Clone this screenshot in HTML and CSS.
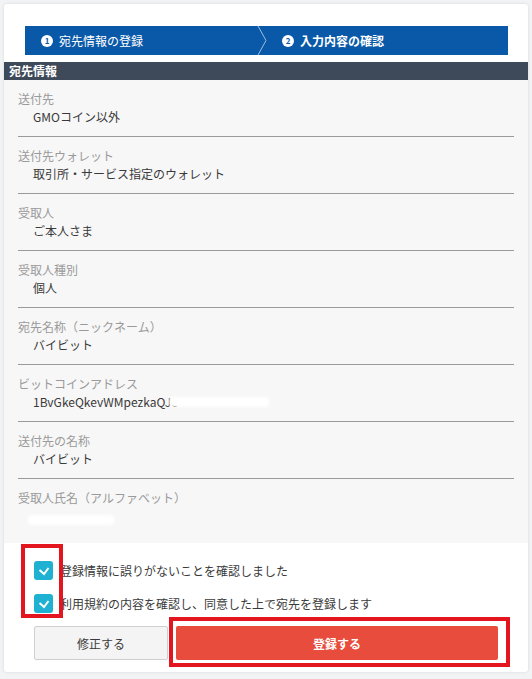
FILE: index.html
```html
<!DOCTYPE html>
<html lang="ja">
  <head>
    <meta charset="utf-8" />
    <meta name="viewport" content="width=device-width, initial-scale=1" />
    <title>宛先情報の確認</title>
    <link rel="stylesheet" href="styles.css">
  </head>
  <body>
    <div class="card">
        <!-- steps -->
        <div class="steps">
            <div class="step"><span class="num">1</span>宛先情報の登録</div>
            <svg class="chevron" width="12" height="29" viewBox="0 0 12 29"><polyline points="1,0 9,14.5 1,29" fill="none" stroke="#9dbde0" stroke-width="1"/></svg>
            <div class="step current"><span class="num">2</span>入力内容の確認</div>
        </div>

        <div class="section-title">宛先情報</div>
        <div class="info">
            <div class="row"><div class="label">送付先</div><div class="value">GMOコイン以外</div></div>
            <div class="row"><div class="label">送付先ウォレット</div><div class="value">取引所・サービス指定のウォレット</div></div>
            <div class="row"><div class="label">受取人</div><div class="value">ご本人さま</div></div>
            <div class="row"><div class="label">受取人種別</div><div class="value">個人</div></div>
            <div class="row"><div class="label">宛先名称（ニックネーム）</div><div class="value">バイビット</div></div>
            <div class="row"><div class="label">ビットコインアドレス</div><div class="value">1BvGkeQkevWMpezkaQJc<span class="masked addr"></span></div></div>
            <div class="row"><div class="label">送付先の名称</div><div class="value">バイビット</div></div>
            <div class="row last"><div class="label">受取人氏名（アルファベット）</div><div class="value"><span class="masked name"></span></div></div>
        </div>

        <div class="confirm">
            <label class="check"><span class="box"><svg width="12" height="10" viewBox="0 0 12 10"><polyline points="1.5,4 6,8 10.5,2" fill="none" stroke="#fff" stroke-width="2"/></svg></span>登録情報に誤りがないことを確認しました</label>
            <label class="check"><span class="box"><svg width="12" height="10" viewBox="0 0 12 10"><polyline points="1.5,4 6,8 10.5,2" fill="none" stroke="#fff" stroke-width="2"/></svg></span>利用規約の内容を確認し、同意した上で宛先を登録します</label>
            <!-- red marking around the checkboxes -->
            <div class="mark mark-checks"></div>

            <div class="buttons">
                <button class="btn btn-back">修正する</button>
                <button class="btn btn-submit">登録する</button>
                <div class="mark mark-submit"></div>
            </div>
        </div>
    </div>
  </body>
</html>
```

FILE: styles.css
```css
body {
    margin: 0;
    background-color: #f2f3f4;
    font-family: "Noto Sans CJK JP", "Noto Sans", sans-serif;
    font-size: 12px;
    color: #3a3a3a;
}

.card {
    margin: 4px;
    width: 524px;
    height: 668px;
    background-color: #fff;
    border-radius: 3px;
    box-shadow: 0 0 3px rgba(0, 0, 0, 0.12);
    padding-top: 22px;
    box-sizing: border-box;
    overflow: hidden;
}

.steps {
    margin: 0 20px 0 21px;
    height: 29px;
    background-color: #0a59a8;
    display: flex;
    align-items: center;
    color: #fff;
}

.step {
    display: flex;
    align-items: center;
    line-height: 29px;
}

/* first step is a fixed width so the chevron sits where it should */
.step:first-child {
    width: 232px;
    padding-left: 16px;
    box-sizing: border-box;
}

.step.current {
    flex: 1;
    font-weight: bold;
    padding-left: 13px;
}

.num {
    width: 12px;
    height: 12px;
    border-radius: 50%;
    background-color: #fff;
    color: #0a59a8;
    font-size: 8px;
    line-height: 12px;
    text-align: center;
    font-weight: bold;
    margin-right: 6px;
}

.chevron {
    display: block;
}

.section-title {
    margin-top: 7px;
    height: 18px;
    line-height: 18px;
    background-color: #3e4a59;
    color: #fff;
    font-weight: bold;
    padding-left: 5px;
}

.info {
    background-color: #f7f7f7;
    padding-bottom: 8px;
}

.row {
    margin: 0 14px;
    padding: 10px 0;
    border-bottom: 1px solid #9a9a9a;
}

.row.last {
    border-bottom: none;
}

.label {
    line-height: 18px;
    color: #9a9a9a;
}

.value {
    line-height: 18px;
    padding-left: 15px;
    height: 18px;
    display: flex;
    align-items: center;
}

.masked {
    display: inline-block;
    height: 10px;
    background-color: #fff;
    border-radius: 4px;
    filter: blur(1.5px);
}

.masked.addr {
    width: 100px;
    margin-left: -8px;
}

.masked.name {
    width: 86px;
    margin-left: -5px;
    margin-top: 8px;
}

.confirm {
    position: relative;
    padding: 18px 30px 0 30px;
}

.check {
    display: flex;
    align-items: center;
    height: 19px;
    margin-bottom: 14px;
    line-height: 19px;
}

.box {
    width: 19px;
    height: 19px;
    border-radius: 3px;
    background-color: #1eb1d2;
    display: flex;
    align-items: center;
    justify-content: center;
    margin-right: 7px;
}

.buttons {
    position: relative;
    display: flex;
    gap: 8px;
    margin-top: -1px;
}

.btn {
    height: 34px;
    font-family: inherit;
    font-size: 12px;
    border-radius: 2px;
    cursor: pointer;
}

.btn-back {
    width: 134px;
    background-color: #f4f4f4;
    border: 1px solid #cfcfcf;
    color: #3a3a3a;
}

.btn-submit {
    width: 322px;
    background-color: #e74c3c;
    border: none;
    color: #fff;
    font-weight: bold;
}

/* red markings drawn over the page */
.mark {
    position: absolute;
    border: 4px solid #e3151f;
    box-sizing: border-box;
}

.mark-checks {
    left: 17px;
    top: 1px;
    width: 42px;
    height: 74px;
}

.mark-submit {
    left: 135px;
    top: -9px;
    width: 341px;
    height: 50px;
}
```
